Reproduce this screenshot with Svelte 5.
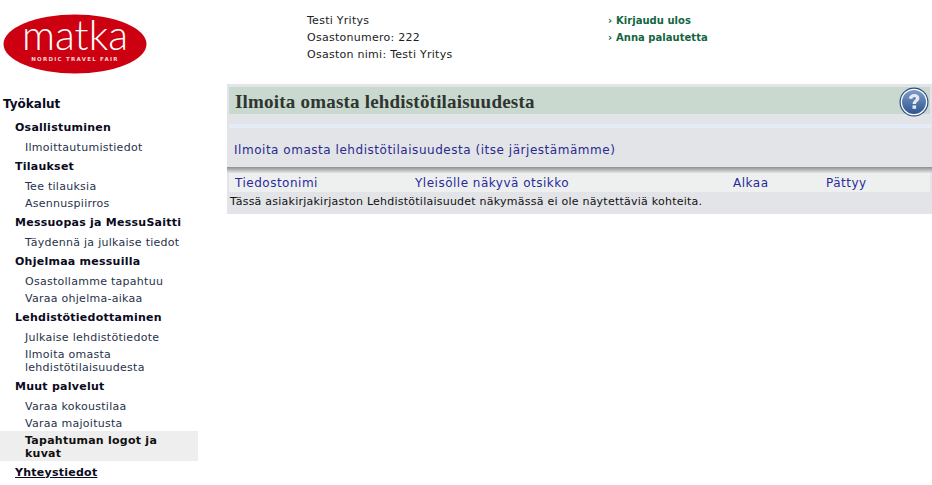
<script>
    const nav = [
        { title: 'Osallistuminen', items: ['Ilmoittautumistiedot'] },
        { title: 'Tilaukset', items: ['Tee tilauksia', 'Asennuspiirros'] },
        { title: 'Messuopas ja MessuSaitti', items: ['Täydennä ja julkaise tiedot'] },
        { title: 'Ohjelmaa messuilla', items: ['Osastollamme tapahtuu', 'Varaa ohjelma-aikaa'] },
        { title: 'Lehdistötiedottaminen', items: ['Julkaise lehdistötiedote', 'Ilmoita omasta lehdistötilaisuudesta'] },
        { title: 'Muut palvelut', items: ['Varaa kokoustilaa', 'Varaa majoitusta'] }
    ];
</script>

<div class="page">
    <header>
        <svg class="logo" width="146" height="60" viewBox="0 0 146 60">
            <ellipse cx="73" cy="30" rx="71.500" ry="29.500" fill="#cc0010" />
            <text x="73" y="36" class="logo-big" text-anchor="middle">matka</text>
            <text x="73" y="47" class="logo-small" text-anchor="middle">NORDIC TRAVEL FAIR</text>
        </svg>
        <div class="info">
            <p>Testi Yritys</p>
            <p>Osastonumero: 222</p>
            <p>Osaston nimi: Testi Yritys</p>
        </div>
        <div class="actions">
            <a href="#out"><span>›</span>Kirjaudu ulos</a>
            <a href="#fb"><span>›</span>Anna palautetta</a>
        </div>
    </header>

    <div class="body">
        <aside>
            <h2>Työkalut</h2>
            {#each nav as group}
                <h3>{group.title}</h3>
                <ul>
                    {#each group.items as item}
                        <li>{item}</li>
                    {/each}
                </ul>
            {/each}
            <div class="current">Tapahtuman logot ja kuvat</div>
            <h3 class="contact">Yhteystiedot</h3>
        </aside>

        <main>
            <div class="title">
                <h1>Ilmoita omasta lehdistötilaisuudesta</h1>
                <svg class="help" width="30" height="30" viewBox="0 0 30 30">
                    <defs>
                        <linearGradient id="helpfill" x1="0" y1="0" x2="0" y2="1">
                            <stop offset="0" stop-color="#7f9cc6" />
                            <stop offset="1" stop-color="#2f5590" />
                        </linearGradient>
                    </defs>
                    <circle cx="15" cy="15" r="14.500" fill="#2b4f80" />
                    <circle cx="15" cy="15" r="13.300" fill="#fff" />
                    <circle cx="15" cy="15" r="12" fill="url(#helpfill)" />
                    <path d="M9.800 11.500c.4-3 2.600-4.500 5.400-4.500 3 0 5.200 1.700 5.200 4.200 0 3.200-3.400 3.300-3.400 5.900h-3.400c0-3.800 3.200-3.900 3.200-5.700 0-.8-.6-1.300-1.600-1.300-1.100 0-1.700.7-1.900 2z" fill="#e4e9f2" />
                    <rect x="13.500" y="18.400" width="3.600" height="3.400" fill="#e4e9f2" />
                </svg>
            </div>
            <div class="stripe"></div>
            <a class="lead" href="#new">Ilmoita omasta lehdistötilaisuudesta (itse järjestämämme)</a>
            <div class="shadow"></div>
            <div class="thead">
                <span>Tiedostonimi</span>
                <span>Yleisölle näkyvä otsikko</span>
                <span>Alkaa</span>
                <span>Pättyy</span>
            </div>
            <p class="empty">Tässä asiakirjakirjaston Lehdistötilaisuudet näkymässä ei ole näytettäviä kohteita.</p>
        </main>
    </div>
</div>

<style>
    :global(body) {
        margin: 0;
        background: #fff;
        font-family: "DejaVu Sans", Verdana, sans-serif;
        font-size: 11px;
        color: #000;
    }

    .page {
        width: 932px;
        height: 485px;
        overflow: hidden;
    }

    p, h1, h2, h3, ul {
        margin: 0;
        padding: 0;
    }

    header {
        display: flex;
        height: 84px;
    }

    .logo {
        margin: 14px 0 0 2px;
        flex: none;
        overflow: visible;
    }

    .logo-big {
        font-family: Lato, sans-serif;
        font-weight: 300;
        font-size: 41px;
        fill: #fff;
    }

    .logo-small {
        font-family: "DejaVu Sans", sans-serif;
        font-weight: 700;
        font-size: 5.500px;
        letter-spacing: 1.250px;
        fill: #f6d5d5;
    }

    .info {
        margin: 12px 0 0 159px;
        width: 300px;
        flex: none;
        line-height: 17px;
        letter-spacing: .27px;
        color: #222;
    }

    .actions {
        margin: 12px 0 0 1px;
        display: flex;
        flex-direction: column;
        font-size: 10px;
        font-weight: 700;
        line-height: 17px;
        letter-spacing: .03px;
    }

    .actions a {
        color: #14653f;
        text-decoration: none;
    }

    .actions span {
        display: inline-block;
        width: 8px;
    }

    .body {
        display: flex;
    }

    aside {
        width: 198px;
        flex: none;
    }

    h2 {
        font-size: 12px;
        line-height: 14px;
        margin: 13px 0 0 3px;
        color: #0a0a20;
    }

    h3 {
        font-size: 11px;
        line-height: 14px;
        letter-spacing: .25px;
        padding-left: 15px;
        margin-top: 2px;
        color: #0a0a20;
    }

    aside h2 + h3 {
        margin-top: 10px;
    }

    ul {
        list-style: none;
        padding: 6px 0 0 25px;
    }

    li {
        font-size: 11px;
        line-height: 13px;
        letter-spacing: .27px;
        padding-bottom: 4px;
        color: #27324a;
    }

    .current {
        background: #eee;
        margin-top: -3px;
        padding: 3px 20px 1px 25px;
        font-weight: 700;
        line-height: 13px;
        font-size: 11px;
        letter-spacing: .25px;
        color: #111;
    }

    .contact {
        text-decoration: underline;
        margin-top: 5px;
    }

    main {
        margin-left: 29px;
        width: 705px;
        height: 130px;
        background: #e3e4e8;
        padding-top: 3px;
        box-sizing: border-box;
        display: flex;
        flex-direction: column;
    }

    .title {
        position: relative;
        margin: 0 2px;
        height: 27px;
        background: #c9d9cf;
    }

    h1 {
        font-family: "Liberation Serif", serif;
        font-size: 19px;
        letter-spacing: .2px;
        line-height: 29px;
        padding-left: 6px;
        color: #2f3530;
    }

    .help {
        position: absolute;
        right: 1px;
        top: 0;
    }

    .stripe {
        margin: 10px 1px 0 2px;
        height: 4px;
        background: #e4ecf8;
    }

    .lead {
        margin: 15px 0 0 7px;
        line-height: 15px;
        font-size: 12px;
        letter-spacing: .53px;
        color: #2a2a8c;
        text-decoration: none;
    }

    .shadow {
        margin-top: 9px;
        height: 6px;
        background: linear-gradient(#8e8e8e, #e3e4e8);
    }

    .thead {
        margin: 0 2px;
        height: 19px;
        display: grid;
        grid-template-columns: 180px 318px 93px 1fr;
        padding-left: 6px;
        align-items: center;
        background: #eef0ef;
        font-size: 12px;
        letter-spacing: .5px;
        color: #2a2a9c;
    }

    .empty {
        padding: 3px 0 0 3px;
        line-height: 14px;
        letter-spacing: .24px;
        color: #111;
    }
</style>
